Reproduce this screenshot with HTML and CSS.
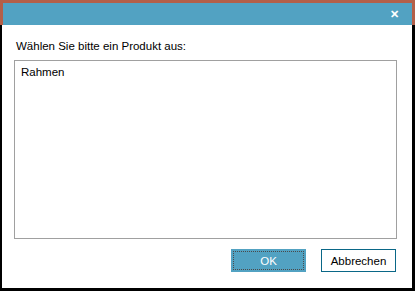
FILE: index.html
```html
<!DOCTYPE html>
<html lang="de">
<head>
    <meta charset="UTF-8">
    <title>Produkt auswählen</title>
    <link rel="stylesheet" href="styles.css">
</head>
<body>
    <div class="window">
        <div class="titlebar">
            <span class="close-btn">&#x2715;</span>
        </div>
        <div class="content">
            <div class="prompt">Wählen Sie bitte ein Produkt aus:</div>
            <div class="listbox">
                <div class="list-item">Rahmen</div>
            </div>
            <div class="buttons">
                <button class="btn btn-ok">OK</button>
                <button class="btn btn-cancel">Abbrechen</button>
            </div>
        </div>
    </div>
</body>
</html>
```

FILE: styles.css
```css
body {
    margin: 0;
    padding: 0;
    font-family: 'Liberation Sans', Arial, sans-serif;
    font-size: 11.5px;
    color: #000;
    background: #fff;
}
.window {
    width: 415px;
    height: 291px;
    display: flex;
    flex-direction: column;
    box-sizing: border-box;
}
.titlebar {
    height: 25px;
    box-sizing: border-box;
    background-color: #52a2c2;
    border-top: 3px solid #b45f48;
    border-left: 3px solid #b45f48;
    border-right: 3px solid #b45f48;
    display: flex;
    justify-content: flex-end;
    align-items: center;
}
.close-btn {
    color: #fff;
    font-size: 11px;
    font-weight: bold;
    margin-right: 13px;
}
.content {
    flex: 1;
    display: flex;
    flex-direction: column;
    border-left: 2px solid #000;
    border-right: 3px solid #000;
    border-bottom: 3px solid #000;
    padding: 14px 15px 16px 12px;
}
.prompt {
    margin-left: 2px;
    line-height: 14px;
}
.listbox {
    flex: 1;
    margin-top: 7px;
    border: 1px solid #a0a0a0;
    padding: 4px 6px;
}
.list-item {
    line-height: 14px;
}
.buttons {
    display: flex;
    justify-content: flex-end;
    gap: 15px;
    margin-top: 10px;
    margin-right: 1px;
}
.btn {
    width: 75px;
    height: 23px;
    font-family: inherit;
    font-size: 11.5px;
    padding: 0;
    margin: 0;
    cursor: pointer;
}
.btn-ok {
    background-color: #52a2c2;
    color: #fff;
    border: 1px solid #52a2c2;
    outline: 1px dotted #4a4a4a;
    outline-offset: -3px;
}
.btn-cancel {
    background-color: #fff;
    color: #000;
    border: 1px solid #0a6787;
}
```
